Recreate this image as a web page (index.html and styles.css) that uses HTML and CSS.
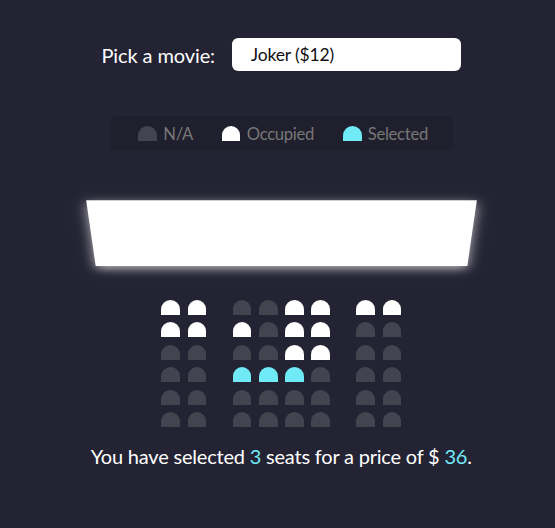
FILE: index.html
```html
<!DOCTYPE html>
<html lang="en">
<head>
<meta charset="UTF-8">
<title>Movie Seat Booking</title>
<link rel="stylesheet" href="styles.css">
</head>
<body>
<div class="movie-container">
  <label class="movie-label" for="movie">Pick a movie:</label>
  <select id="movie" class="movie-select">
    <option value="10">Avengers: Endgame ($10)</option>
    <option value="12" selected>Joker ($12)</option>
    <option value="8">Toy Story 4 ($8)</option>
    <option value="9">The Lion King ($9)</option>
  </select>
</div>

<ul class="showcase">
  <li class="legend-item"><div class="seat legend-seat"></div><small class="legend-text">N/A</small></li>
  <li class="legend-item"><div class="seat legend-seat occupied"></div><small class="legend-text">Occupied</small></li>
  <li class="legend-item"><div class="seat legend-seat selected"></div><small class="legend-text">Selected</small></li>
</ul>

<div class="container">
  <div class="screen"></div>
  <div class="row">
    <div class="seat occupied"></div><div class="seat occupied gap-right"></div>
    <div class="seat"></div><div class="seat"></div><div class="seat occupied"></div><div class="seat occupied"></div>
    <div class="seat occupied gap-left"></div><div class="seat occupied"></div>
  </div>
  <div class="row">
    <div class="seat occupied"></div><div class="seat occupied gap-right"></div>
    <div class="seat occupied"></div><div class="seat"></div><div class="seat occupied"></div><div class="seat occupied"></div>
    <div class="seat gap-left"></div><div class="seat"></div>
  </div>
  <div class="row">
    <div class="seat"></div><div class="seat gap-right"></div>
    <div class="seat"></div><div class="seat"></div><div class="seat occupied"></div><div class="seat occupied"></div>
    <div class="seat gap-left"></div><div class="seat"></div>
  </div>
  <div class="row">
    <div class="seat"></div><div class="seat gap-right"></div>
    <div class="seat selected"></div><div class="seat selected"></div><div class="seat selected"></div><div class="seat"></div>
    <div class="seat gap-left"></div><div class="seat"></div>
  </div>
  <div class="row">
    <div class="seat"></div><div class="seat gap-right"></div>
    <div class="seat"></div><div class="seat"></div><div class="seat"></div><div class="seat"></div>
    <div class="seat gap-left"></div><div class="seat"></div>
  </div>
  <div class="row">
    <div class="seat"></div><div class="seat gap-right"></div>
    <div class="seat"></div><div class="seat"></div><div class="seat"></div><div class="seat"></div>
    <div class="seat gap-left"></div><div class="seat"></div>
  </div>
</div>

<p class="text">You have selected <span class="highlight">3</span> seats for a price of $ <span class="highlight">36</span>.</p>
</body>
</html>
```

FILE: styles.css
```css
* {
  box-sizing: border-box;
}

html {
  background-color: #242333;
}

body {
  background-color: #242333;
  color: #fff;
  display: flex;
  flex-direction: column;
  align-items: center;
  min-height: 100vh;
  margin: 0;
  padding-left: 7.5px;
  font-family: "Lato", "Liberation Sans", sans-serif;
}

.movie-container {
  display: flex;
  align-items: center;
  margin: 38px 0 25px;
}

.movie-label {
  font-size: 20px;
  letter-spacing: -0.1px;
}

.movie-select {
  background-color: #fff;
  color: #111;
  border: 0;
  border-radius: 6.25px;
  font-family: "Lato", "Liberation Sans", sans-serif;
  font-size: 17.5px;
  letter-spacing: -0.15px;
  margin-left: 17px;
  padding: 0 18.75px;
  width: 229px;
  height: 33px;
  -webkit-appearance: none;
  appearance: none;
}

.showcase {
  background: rgba(0, 0, 0, 0.1);
  padding: 6.25px 12.5px;
  border-radius: 6.25px;
  color: #777;
  list-style-type: none;
  display: flex;
  justify-content: space-between;
  margin: 20px 0;
}

.legend-item {
  display: flex;
  align-items: center;
  justify-content: center;
  margin: 0 12.5px;
}

.legend-text {
  font-size: 16.67px;
  letter-spacing: -0.3px;
  margin-left: 2.5px;
}

.seat {
  background-color: #444451;
  height: 15px;
  width: 18.75px;
  margin: 3.75px;
  border-top-left-radius: 12.5px;
  border-top-right-radius: 12.5px;
}

.seat.selected {
  background-color: #6feaf6;
}

.seat.occupied {
  background-color: #fff;
}

.seat.gap-right {
  margin-right: 22.5px;
}

.seat.gap-left {
  margin-left: 22.5px;
}

.container {
  perspective: 1250px;
  width: 381px;
  margin-bottom: 7px;
}

.screen {
  background-color: #fff;
  height: 87.5px;
  width: 100%;
  margin: 18.75px 0;
  transform: rotateX(-45deg);
  box-shadow: 0 3.75px 12.5px rgba(255, 255, 255, 0.7);
}

.row {
  display: flex;
  justify-content: center;
}

.text {
  margin: 6.25px 0;
  font-size: 20px;
  letter-spacing: -0.2px;
}

.highlight {
  color: #6feaf6;
}
```
